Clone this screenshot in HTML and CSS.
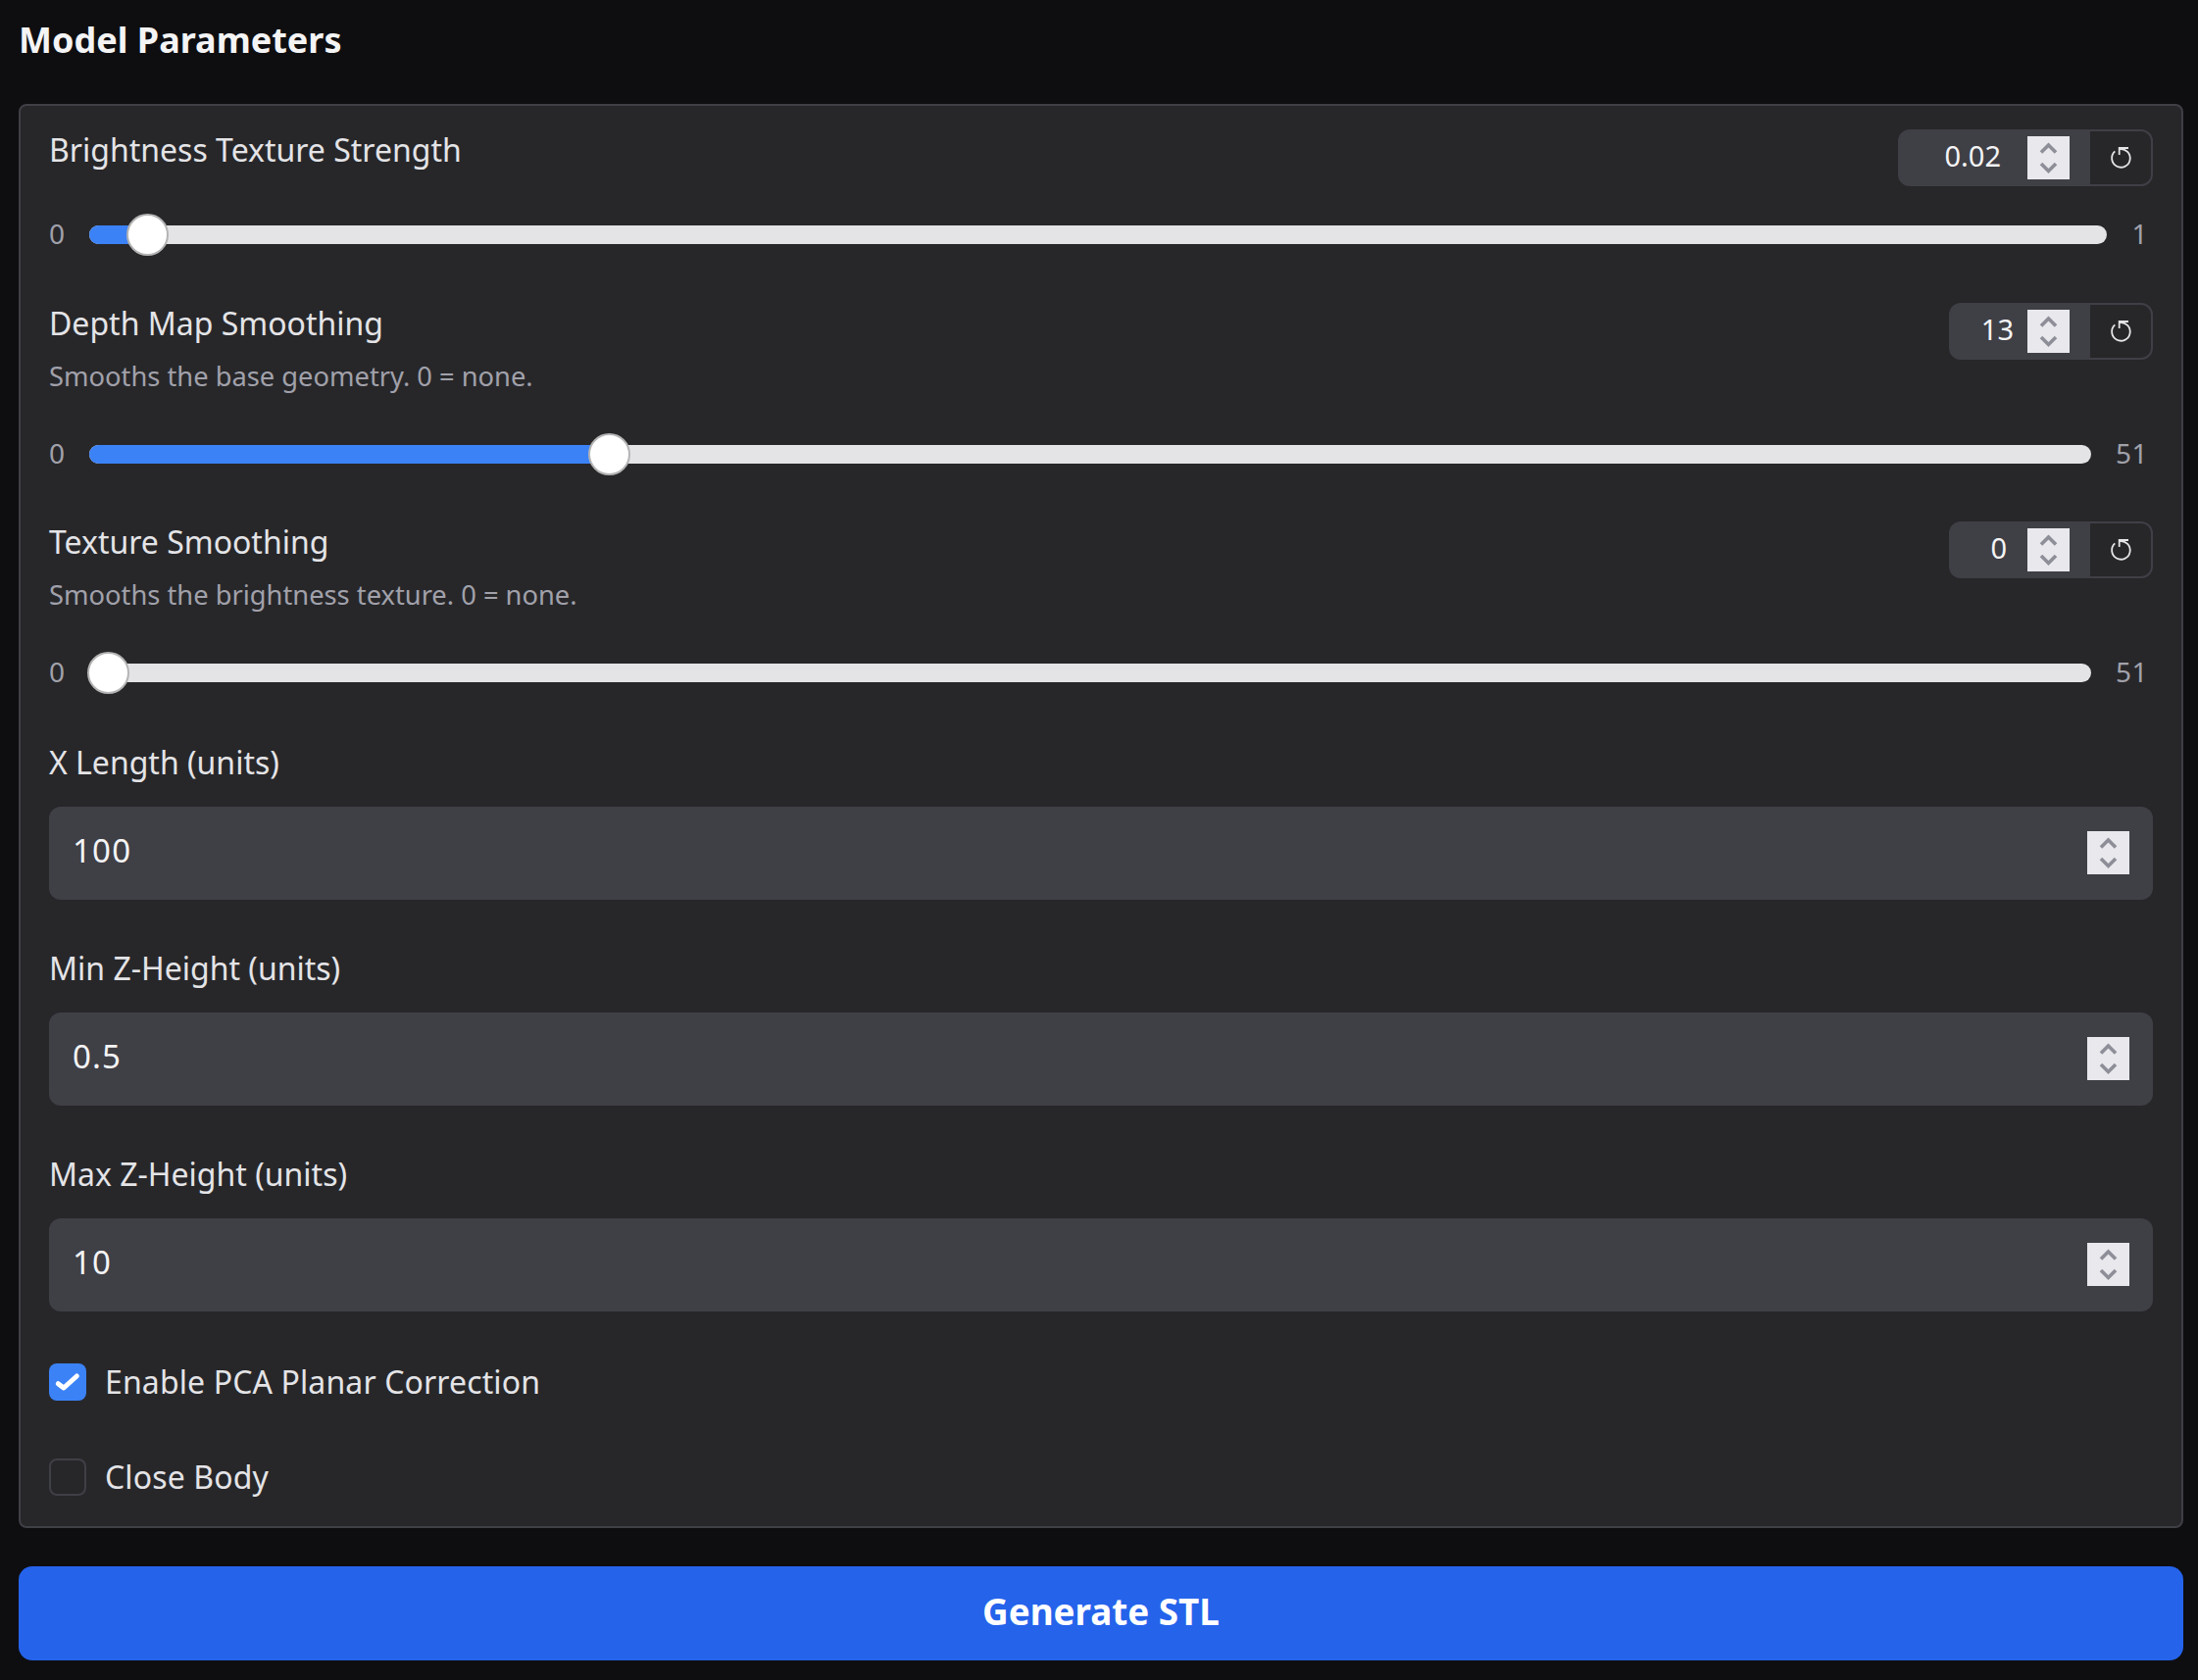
FILE: index.html
```html
<!DOCTYPE html>
<html lang="en">
<head>
<meta charset="utf-8">
<title>Model Parameters</title>
<link rel="stylesheet" href="styles.css">
</head>
<body>
<h2 class="title">Model Parameters</h2>
<section class="panel">
  <div class="block">
    <div class="head">
      <div class="head-text"><div class="label">Brightness Texture Strength</div></div>
      <div class="numbox">
        <span class="numval numval-a">0.02</span>
        <span class="spin"><svg viewBox="0 0 43 44" width="43" height="44"><path class="chev" d="M14 16.5 21.5 9 29 16.5M14 28 21.5 35.5 29 28"/></svg></span>
        <button class="reset"><svg viewBox="0 0 24 24" width="24" height="24"><path class="reseticon" d="M6.3 5.4A9.3 9.3 0 1 0 11 3.2M20 2H10.7V9"/></svg></button>
      </div>
    </div>
    <div class="slider">
      <span class="end">0</span>
      <div class="track" style="--v:0.02"><div class="fill"></div><div class="thumb"></div></div>
      <span class="end">1</span>
    </div>
  </div>
  <div class="block">
    <div class="head">
      <div class="head-text"><div class="label">Depth Map Smoothing</div><div class="desc">Smooths the base geometry. 0 = none.</div></div>
      <div class="numbox">
        <span class="numval numval-b">13</span>
        <span class="spin"><svg viewBox="0 0 43 44" width="43" height="44"><path class="chev" d="M14 16.5 21.5 9 29 16.5M14 28 21.5 35.5 29 28"/></svg></span>
        <button class="reset"><svg viewBox="0 0 24 24" width="24" height="24"><path class="reseticon" d="M6.3 5.4A9.3 9.3 0 1 0 11 3.2M20 2H10.7V9"/></svg></button>
      </div>
    </div>
    <div class="slider">
      <span class="end">0</span>
      <div class="track" style="--v:0.2549"><div class="fill"></div><div class="thumb"></div></div>
      <span class="end">51</span>
    </div>
  </div>
  <div class="block">
    <div class="head">
      <div class="head-text"><div class="label">Texture Smoothing</div><div class="desc">Smooths the brightness texture. 0 = none.</div></div>
      <div class="numbox">
        <span class="numval numval-c">0</span>
        <span class="spin"><svg viewBox="0 0 43 44" width="43" height="44"><path class="chev" d="M14 16.5 21.5 9 29 16.5M14 28 21.5 35.5 29 28"/></svg></span>
        <button class="reset"><svg viewBox="0 0 24 24" width="24" height="24"><path class="reseticon" d="M6.3 5.4A9.3 9.3 0 1 0 11 3.2M20 2H10.7V9"/></svg></button>
      </div>
    </div>
    <div class="slider">
      <span class="end">0</span>
      <div class="track" style="--v:0"><div class="fill"></div><div class="thumb"></div></div>
      <span class="end">51</span>
    </div>
  </div>
  <div class="field">
    <div class="label field-label">X Length (units)</div>
    <div class="input"><span class="inputval">100</span><span class="spin"><svg viewBox="0 0 43 44" width="43" height="44"><path class="chev" d="M14 16.5 21.5 9 29 16.5M14 28 21.5 35.5 29 28"/></svg></span></div>
  </div>
  <div class="field">
    <div class="label field-label">Min Z-Height (units)</div>
    <div class="input"><span class="inputval">0.5</span><span class="spin"><svg viewBox="0 0 43 44" width="43" height="44"><path class="chev" d="M14 16.5 21.5 9 29 16.5M14 28 21.5 35.5 29 28"/></svg></span></div>
  </div>
  <div class="field">
    <div class="label field-label">Max Z-Height (units)</div>
    <div class="input"><span class="inputval">10</span><span class="spin"><svg viewBox="0 0 43 44" width="43" height="44"><path class="chev" d="M14 16.5 21.5 9 29 16.5M14 28 21.5 35.5 29 28"/></svg></span></div>
  </div>
  <div class="check">
    <span class="box box-on"><svg viewBox="0 0 38 38" width="38" height="38"><path class="tick" d="M9.3 20.7 15 25 28.3 13"/></svg></span>
    <span class="label check-label">Enable PCA Planar Correction</span>
  </div>
  <div class="check">
    <span class="box"></span>
    <span class="label check-label">Close Body</span>
  </div>
</section>
<button class="generate">Generate STL</button>
</body>
</html>
```
FILE: styles.css
```css
* { box-sizing: border-box; }
html, body { margin: 0; height: 1714px; overflow: hidden; }
body {
  background: #0e0e11;
  font-family: "Noto Sans", "Open Sans", sans-serif;
  color: #e4e4e7;
  padding: 0 15px 20px 19px;
}
.title {
  margin: 0;
  padding: 16px 0 40px;
  font-size: 36px;
  line-height: 50px;
  font-weight: 700;
  color: #f4f4f5;
}
.panel {
  display: flex;
  flex-direction: column;
  gap: 47.6px;
  background: #27272a;
  border: 2px solid #3f3f46;
  border-radius: 8px;
  padding: 24px 29px;
}
.head { display: flex; justify-content: space-between; align-items: flex-start; min-height: 58px; }
.label { font-size: 32px; line-height: 42px; padding-bottom: 2px; color: #e4e4e7; }
.field-label { line-height: 44px; padding-bottom: 0; }
.check-label { letter-spacing: 0.12px; }
.desc { font-size: 27.3px; line-height: 37px; margin: 12px 0; color: #a1a1aa; }
.numbox {
  display: flex;
  align-items: stretch;
  height: 58px;
  background: #3f3f46;
  border: 2px solid #3f3f46;
  border-radius: 12px;
  overflow: hidden;
}
.numval { font-size: 29px; line-height: 50px; text-align: right; color: #f4f4f5; }
.numval-a { width: 103px; margin-right: 27px; }
.numval-b { width: 64px; margin-right: 14px; }
.numval-c { width: 57px; margin-right: 21px; }
.spin {
  display: block;
  width: 43px;
  height: 44px;
  background: #e8e8ed;
  flex: none;
}
.spin svg { display: block; }
.numbox .spin { align-self: center; margin-right: 21px; }
.chev { fill: none; stroke: #8e8e98; stroke-width: 3.6; }
.reset {
  width: 62px;
  padding: 0;
  border: 0;
  background: #27272a;
  display: flex;
  align-items: center;
  justify-content: center;
}
.reseticon { fill: none; stroke: #e4e4e7; stroke-width: 1.8; }
.slider { display: flex; align-items: center; height: 43px; margin-top: 28px; }
.end { font-size: 28px; line-height: 34px; padding-bottom: 3px; color: #a1a1aa; letter-spacing: 0.5px; }
.slider .end:first-child { width: 41px; flex: none; }
.slider .end:last-child { margin: 0 5px 0 25px; flex: none; }
.track {
  position: relative;
  flex: 1;
  height: 19px;
  background: #e4e4e7;
  border-radius: 10px;
}
.fill {
  position: absolute;
  left: 0; top: 0; bottom: 0;
  width: calc((100% - 39px) * var(--v) + 19px);
  background: #3b82f6;
  border-radius: 10px 0 0 10px;
}
.thumb {
  position: absolute;
  top: -12px;
  left: calc((100% - 39px) * var(--v) - 2px);
  width: 43px;
  height: 43px;
  border-radius: 50%;
  background: #fff;
  border: 2px solid #b4b4b4;
}
.field .input { margin-top: 23px; }
.input {
  display: flex;
  align-items: center;
  justify-content: space-between;
  height: 95.4px;
  padding: 0 24px;
  background: #3f3f46;
  border-radius: 12px;
  color: #f4f4f5;
}
.inputval { font-size: 33px; letter-spacing: 1.2px; padding-bottom: 5px; }
.check { display: flex; align-items: center; height: 50px; gap: 19px; }
.box {
  width: 38px;
  height: 38px;
  margin-top: -2px;
  border: 2px solid #3f3f46;
  border-radius: 8px;
  flex: none;
}
.box-on { background: #3b82f6; border: 0; }
.box svg { display: block; }
.tick { fill: none; stroke: #fff; stroke-width: 5; stroke-linecap: round; stroke-linejoin: round; }
.generate {
  display: block;
  width: 100%;
  height: 96px;
  margin-top: 39px;
  padding: 0 0 5px;
  border: 0;
  border-radius: 14px;
  background: #2563eb;
  color: #fff;
  font-family: inherit;
  font-size: 36.8px;
  font-weight: 700;
}
```
